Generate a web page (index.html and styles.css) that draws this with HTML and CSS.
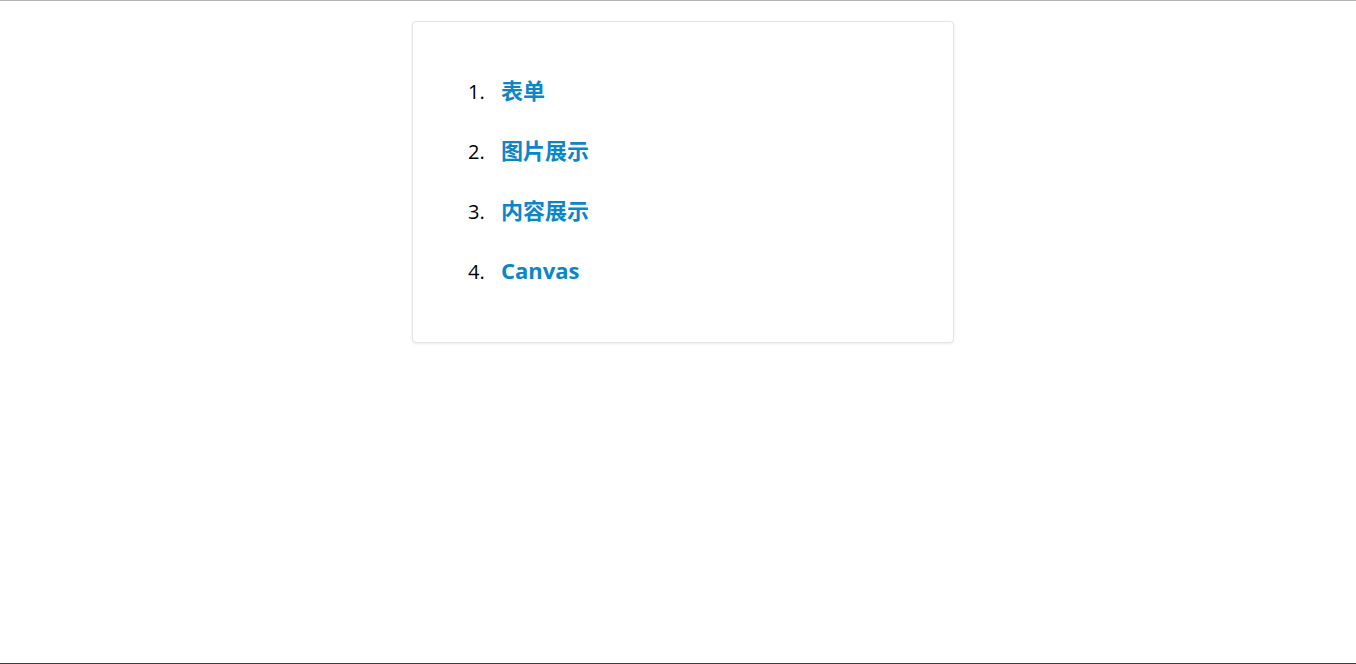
FILE: index.html
```html
<!DOCTYPE html>
<html lang="zh">
<head>
<meta charset="utf-8">
<title>Demo</title>
<link rel="stylesheet" href="styles.css">
</head>
<body>
<div class="page">
  <div class="top-rule"></div>
  <main class="content">
    <div class="card">
      <ol class="menu">
        <li class="item"><span class="num">1.</span><a class="link" href="#">表单</a></li>
        <li class="item"><span class="num">2.</span><a class="link" href="#">图片展示</a></li>
        <li class="item"><span class="num">3.</span><a class="link" href="#">内容展示</a></li>
        <li class="item"><span class="num">4.</span><a class="link" href="#">Canvas</a></li>
      </ol>
    </div>
  </main>
  <div class="bottom-rule"></div>
</div>
</body>
</html>
```
FILE: styles.css
```css
html, body {
  margin: 0;
  padding: 0;
  background: #fff;
}
body {
  font-family: "Open Sans", "Noto Sans CJK SC", sans-serif;
}
.page {
  display: flex;
  flex-direction: column;
  height: 100vh;
}
.top-rule {
  height: 1px;
  background: #b4b4b4;
  flex: none;
}
.bottom-rule {
  height: 1px;
  background: #3a3d40;
  flex: none;
}
.content {
  flex: 1;
  padding-top: 20px;
  padding-left: 10px;
  box-sizing: border-box;
  display: flex;
  justify-content: center;
  align-items: flex-start;
}
.card {
  width: 542px;
  box-sizing: border-box;
  border: 1px solid #e3e3e3;
  border-radius: 4px;
  box-shadow: 0 1px 3px rgba(0, 0, 0, 0.08);
  padding: 40px 55px;
  background: #fff;
}
.menu {
  list-style: none;
  margin: 0;
  padding: 0;
}
.item {
  display: flex;
  align-items: baseline;
  height: 60px;
  line-height: 56px;
}
.num {
  width: 33px;
  font-size: 20px;
  color: #000;
}
.link {
  font-family: "Open Sans", "Noto Sans CJK SC", sans-serif;
  font-weight: 700;
  font-size: 22px;
  color: #0a86c9;
  text-decoration: none;
}
```
